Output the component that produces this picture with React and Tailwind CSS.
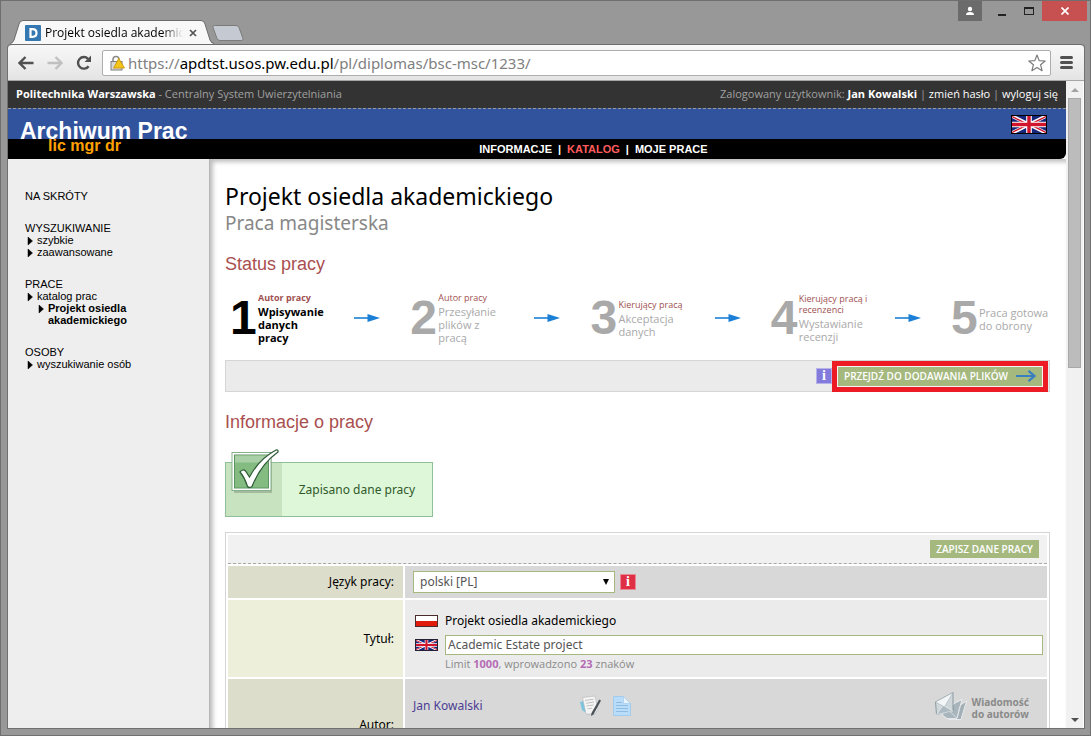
import React, { useState } from "react";

const steps = [
  { number: 1, who: ["Autor pracy"], what: ["Wpisywanie", "danych", "pracy"], active: true },
  { number: 2, who: ["Autor pracy"], what: ["Przesyłanie", "plików z", "pracą"] },
  { number: 3, who: ["Kierujący pracą"], what: ["Akceptacja", "danych"] },
  { number: 4, who: ["Kierujący pracą i", "recenzenci"], what: ["Wystawianie", "recenzji"] },
  { number: 5, who: [], what: ["Praca gotowa", "do obrony"] },
];

const UkFlag = ({ className }) => (
  <svg viewBox="0 0 60 30" preserveAspectRatio="none" className={className} aria-hidden="true">
    <rect width="60" height="30" fill="#15257a" />
    <path d="M0 0L60 30M60 0L0 30" stroke="#fff" strokeWidth="6" />
    <path d="M0 1L28 15M60 1L32 15M0 29L28 15M60 29L32 15" stroke="#cf142b" strokeWidth="2.5" />
    <path d="M30 0V30M0 15H60" stroke="#fff" strokeWidth="10" />
    <path d="M30 0V30M0 15H60" stroke="#cf142b" strokeWidth="6" />
  </svg>
);

const PlFlag = () => (
  <svg viewBox="0 0 23 12" className="w-[23px] h-3" aria-hidden="true">
    <rect width="23" height="6" fill="#fff" />
    <rect y="6" width="23" height="6" fill="#e01b0c" />
    <rect x="0.5" y="0.5" width="22" height="11" fill="none" stroke="#4a2a2a" />
  </svg>
);

const StepArrow = () => (
  <svg viewBox="0 0 26 10" className="w-[26px] h-[10px]" aria-hidden="true">
    <path d="M0 5H16" stroke="#1b7fd6" strokeWidth="1.6" />
    <path d="M13.5 1L26 5L13.5 9Z" fill="#1b7fd6" />
  </svg>
);

const InfoIcon = ({ className }) => (
  <span className={`w-4 h-4 shrink-0 border flex items-center justify-center text-white font-bold text-[14px] leading-none font-['Liberation_Serif',serif] ${className}`}>
    i
  </span>
);

const MenuItem = ({ children, nested }) => (
  <li className={nested ? "flex pl-[11px] font-bold" : "flex"}>
    <svg viewBox="0 0 12 12" className="w-3 h-3 shrink-0" aria-hidden="true">
      <path d="M3 3L7.5 7L3 11Z" fill="#000" stroke="#000" strokeWidth="0.5" />
    </svg>
    <a href="#">{children}</a>
  </li>
);

const TitleBar = () => (
  <div className="flex justify-between items-start h-[43px] pl-[9px] pr-[3px]">
    <div className="flex items-end h-full">
      <svg viewBox="0 0 13 24" className="w-[13px] h-6" aria-hidden="true">
        <path d="M0 24Q3 23 4 20L9 4Q10 0.5 13 0.5V24Z" fill="#f8f8f8" />
        <path d="M0 23.5Q3 23 4 20L9 4Q10 0.5 13 0.5" fill="none" stroke="#6c6c6c" />
      </svg>
      <div className="h-6 w-[178px] flex items-center border-t border-[#6c6c6c] bg-[#f8f8f8]">
        <svg viewBox="0 0 16 16" className="w-4 h-4 shrink-0 ml-[2px]" aria-hidden="true">
          <rect width="16" height="16" rx="1" fill="#3577b1" />
          <path d="M5.5 4.2H7.5Q11.5 4.2 11.5 8Q11.5 11.8 7.5 11.8H5.500Z" fill="none" stroke="#fff" strokeWidth="2.2" />
        </svg>
        <span className="ml-1 w-[138px] overflow-hidden whitespace-nowrap text-[12px] leading-4 font-['Open_Sans',sans-serif] bg-linear-to-r from-black from-85% to-transparent bg-clip-text text-transparent">
          Projekt osiedla akademickiego
        </span>
        <button aria-label="Zamknij kartę" className="ml-[6px]">
          <svg viewBox="0 0 8 8" className="w-2 h-2">
            <path d="M1 1L7 7M7 1L1 7" stroke="#555" strokeWidth="1.7" />
          </svg>
        </button>
      </div>
      <svg viewBox="0 0 13 24" className="w-[13px] h-6" aria-hidden="true">
        <path d="M13 24Q10 23 9 20L4 4Q3 0.5 0 0.5V24Z" fill="#f8f8f8" />
        <path d="M13 23.5Q10 23 9 20L4 4Q3 0.5 0 0.5" fill="none" stroke="#6c6c6c" />
      </svg>
      <button aria-label="Nowa karta" className="mb-[3px] -ml-[2px]">
        <svg viewBox="0 0 32 16" className="w-8 h-4">
          <path d="M2.5 0.5H24Q26 0.5 27 2.5L31 13.5Q31.5 15.5 29.5 15.5H8Q6 15.5 5 13.5L1 2.5Q0.5 0.5 2.5 0.5Z" fill="#c5cad2" stroke="#7b7b7b" />
        </svg>
      </button>
    </div>
    <div className="flex items-start">
      <button aria-label="Profil" className="w-6 h-5 bg-[#6b6b6b] flex items-center justify-center mr-[6px]">
        <svg viewBox="0 0 10 10" className="w-[10px] h-[10px]">
          <circle cx="5" cy="3" r="2.2" fill="#fff" />
          <path d="M1 9Q1 6 5 6Q9 6 9 9Z" fill="#fff" />
        </svg>
      </button>
      <button aria-label="Minimalizuj" className="w-[27px] h-5 flex items-end justify-center pb-[5px]">
        <span className="w-2 h-[2px] bg-[#222]"></span>
      </button>
      <button aria-label="Maksymalizuj" className="w-[27px] h-5 flex items-center justify-center">
        <span className="w-[10px] h-2 border border-t-2 border-[#222]"></span>
      </button>
      <button aria-label="Zamknij" className="w-[45px] h-5 bg-[#c75050] flex items-center justify-center">
        <svg viewBox="0 0 8 8" className="w-2 h-2">
          <path d="M0.5 0.5L7.5 7.5M7.5 0.5L0.5 7.5" stroke="#fff" strokeWidth="1.7" />
        </svg>
      </button>
    </div>
  </div>
);

const Toolbar = () => (
  <div className="h-[37px] shrink-0 flex items-center pl-[10px] pr-[11px] border-t border-b border-t-[#6c6c6c] border-b-[#a6a6a6] rounded-t-sm bg-linear-to-b from-[#f8f8f8] to-[#e4e4e4]">
    <button aria-label="Wstecz">
      <svg viewBox="0 0 16 14" className="w-4 h-[14px]">
        <path d="M15.5 7H2M7.5 1L1.5 7L7.5 13" fill="none" stroke="#505050" strokeWidth="2.4" />
      </svg>
    </button>
    <button aria-label="Dalej" className="ml-[13px]">
      <svg viewBox="0 0 16 14" className="w-4 h-[14px]">
        <path d="M0.5 7H14M8.5 1L14.5 7L8.5 13" fill="none" stroke="#c0c0c0" strokeWidth="2.4" />
      </svg>
    </button>
    <button aria-label="Odśwież" className="ml-[13px]">
      <svg viewBox="0 0 16 16" className="w-4 h-4">
        <path d="M12.6 11.2A5.8 5.8 0 1 1 12 3.8" fill="none" stroke="#505050" strokeWidth="2.4" />
        <path d="M15 0.5V7H8.5Z" fill="#505050" />
      </svg>
    </button>
    <div className="ml-[10px] flex-1 h-[26px] flex items-center pl-[7px] pr-1 border border-[#adadad] rounded-xs bg-white">
      <svg viewBox="0 0 15 16" className="w-[15px] h-4" aria-hidden="true">
        <path d="M3 8V4.5Q3 1.5 6 1.5Q9 1.5 9 4.5V8" fill="none" stroke="#8c8c8c" strokeWidth="1.6" />
        <rect x="1" y="6.5" width="11" height="8.5" fill="#d8d8d8" stroke="#7e7e7e" />
        <path d="M8.8 3.5L14.5 13H3.5Z" fill="#f4c518" stroke="#cf9c12" strokeLinejoin="round" />
      </svg>
      <div role="textbox" aria-label="Adres" className="ml-[3px] flex-1 whitespace-nowrap text-[15px] leading-5 text-[#808080]">
        https://<span className="text-black">apdtst.usos.pw.edu.pl</span>/pl/diplomas/bsc-msc/1233/
      </div>
      <button aria-label="Dodaj zakładkę">
        <svg viewBox="0 0 18 18" className="w-[18px] h-[18px]">
          <path d="M9 1L11.2 6.6L17.2 7L12.6 10.8L14.1 16.7L9 13.5L3.9 16.7L5.4 10.8L0.8 7L6.8 6.6Z" fill="#fff" stroke="#7c7c7c" strokeWidth="1.2" strokeLinejoin="round" />
        </svg>
      </button>
    </div>
    <button aria-label="Menu" className="ml-[9px] flex flex-col gap-[2px]">
      <span className="w-[13px] h-[3px] rounded-xs bg-[#505050]"></span>
      <span className="w-[13px] h-[3px] rounded-xs bg-[#505050]"></span>
      <span className="w-[13px] h-[3px] rounded-xs bg-[#505050]"></span>
    </button>
  </div>
);

const Header = () => (
  <header className="shrink-0">
    <div className="h-[27px] flex items-center justify-between px-2 bg-[#333] text-[11px] text-[#a0a0a0] font-['Open_Sans',sans-serif]">
      <div><b className="text-white">Politechnika Warszawska</b> - Centralny System Uwierzytelniania</div>
      <div>
        Zalogowany użytkownik: <b className="text-white">Jan Kowalski</b> | <a href="#" className="text-white">zmień hasło</a> | <a href="#" className="text-white">wyloguj się</a>
      </div>
    </div>
    <div className="h-[31px] flex justify-between items-center pl-3 pr-[19px] border-t border-dashed border-[#9a9a9a] bg-[#31529c]">
      <div className="self-end text-[23px] leading-4 font-bold text-white font-['Liberation_Sans',sans-serif]">Archiwum Prac</div>
      <a href="#" aria-label="English"><UkFlag className="w-9 h-[19px] border border-black" /></a>
    </div>
    <div className="h-5 flex items-center pl-10 rounded-br-md bg-black font-bold font-['Liberation_Sans',sans-serif]">
      <div className="h-5 text-[16px] leading-[14px] text-[#ffa200]">lic mgr dr</div>
      <nav className="flex-1 flex justify-center gap-[6px] text-[11px] leading-4 text-white">
        <a href="#">INFORMACJE</a>|<a href="#" className="text-[#ff5c5c]">KATALOG</a>|<a href="#">MOJE PRACE</a>
      </nav>
    </div>
  </header>
);

const Sidebar = () => (
  <aside className="w-[202px] shrink-0 pt-[31px] pl-[17px] flex flex-col gap-5 bg-[#eee] border-r border-[#b5b5b5] text-[11px] leading-3 text-black font-['Liberation_Sans',sans-serif]">
    <div>NA SKRÓTY</div>
    <div>
      <div>WYSZUKIWANIE</div>
      <ul>
        <MenuItem>szybkie</MenuItem>
        <MenuItem>zaawansowane</MenuItem>
      </ul>
    </div>
    <div>
      <div>PRACE</div>
      <ul>
        <MenuItem>katalog prac</MenuItem>
        <MenuItem nested>Projekt osiedla<br />akademickiego</MenuItem>
      </ul>
    </div>
    <div>
      <div>OSOBY</div>
      <ul>
        <MenuItem>wyszukiwanie osób</MenuItem>
      </ul>
    </div>
  </aside>
);

const Step = ({ step }) => (
  <li className={`w-[97px] shrink-0 flex items-center ${step.active ? "text-black font-bold" : "text-[#a9a9a9]"}`}>
    <span className="w-7 shrink-0 text-[48px] leading-none font-bold font-['Liberation_Sans',sans-serif]">{step.number}</span>
    <div className="whitespace-nowrap font-['Open_Sans',sans-serif]">
      <div className="text-[9px] leading-[11px] text-[#a05050]">
        {step.who.map(line => <div key={line}>{line}</div>)}
      </div>
      <div className="pt-[2px] text-[11px] leading-[13px]">
        {step.what.map(line => <div key={line}>{line}</div>)}
      </div>
    </div>
  </li>
);

const SavedMessage = () => (
  <div role="status" className="relative mt-7 w-[208px] h-[55px] flex items-center border border-[#8fbf96] bg-[#dff7d9] text-[12px] text-[#2f5a2a]">
    <div className="w-14 h-full bg-[#c8e3c0]"></div>
    <div className="flex-1 text-center">Zapisano dane pracy</div>
    <svg viewBox="0 0 50 50" className="absolute left-[5px] -top-[14px] w-[50px] h-[50px]" aria-hidden="true">
      <rect x="3" y="6" width="38" height="38" fill="#000" opacity="0.18" />
      <rect x="1" y="3.5" width="39" height="38" fill="#fff" stroke="#86b08a" />
      <rect x="3.5" y="6" width="34" height="33" fill="#83bb80" stroke="#5d9462" />
      <rect x="4" y="6.5" width="33" height="7" fill="#a9cfa6" />
      <path d="M9 23Q12 19.5 14.5 22L18.5 28Q28 10 45.5 0.8Q47.5 0.8 47 3Q30 15 21 37.5Q18.5 39.5 16.5 37.5Q14 29 9 23Z" fill="#fff" stroke="#2e5c36" strokeWidth="1.2" />
    </svg>
  </div>
);

const Row = ({ label, htmlFor, alt, className, children }) => (
  <div className={`flex gap-[2px] ${className}`}>
    <label htmlFor={htmlFor} className={`w-[175px] shrink-0 flex items-center justify-end pr-[9px] text-black ${alt ? "bg-[#edefdb]" : "bg-[#dcddca]"}`}>
      {label}
    </label>
    <div className={`flex-1 px-2 ${alt ? "bg-[#ebebeb]" : "bg-[#d8d8d8]"}`}>{children}</div>
  </div>
);

const ThesisForm = () => {
  const [language, setLanguage] = useState("pl");
  const [title, setTitle] = useState("Academic Estate project");

  return (
    <form className="mt-[15px] p-[2px] border border-[#d5d5d5] flex flex-col gap-[2px] text-[12px]" onSubmit={(e) => e.preventDefault()}>
      <div className="h-[29px] flex items-center justify-end pr-2 bg-[#f1f1f1] border-b border-dashed border-[#a8a8a8]">
        <button className="h-[18px] px-[6px] bg-[#a5b97f] text-white text-[10px] leading-4 font-semibold font-['Open_Sans',sans-serif]">ZAPISZ DANE PRACY</button>
      </div>
      <Row label="Język pracy:" htmlFor="language" className="h-8">
        <div className="h-full flex items-center gap-[5px]">
          <div className="relative w-[202px]">
            <select
              id="language"
              value={language}
              onChange={(e) => setLanguage(e.target.value)}
              className="w-full h-[22px] pl-[6px] appearance-none border border-[#a5b97f] bg-white text-[#555]"
            >
              <option value="pl">polski [PL]</option>
              <option value="en">angielski [EN]</option>
            </select>
            <svg viewBox="0 0 6 6" className="absolute right-[6px] top-2 w-[6px] h-[6px] pointer-events-none" aria-hidden="true">
              <path d="M0 0H6L3 6Z" fill="#000" />
            </svg>
          </div>
          <InfoIcon className="bg-[#df2f44] border-[#e88a96]" />
        </div>
      </Row>
      <Row label="Tytuł:" htmlFor="title" alt className="h-[77px]">
        <div className="h-full flex flex-col justify-center pt-[5px] -mr-1 pl-[2px]">
          <div className="flex items-center gap-[7px] h-[25px] pb-[3px] text-black"><PlFlag />Projekt osiedla akademickiego</div>
          <div className="flex items-center gap-[7px]">
            <UkFlag className="w-[23px] h-3 border border-[#223]" />
            <input
              id="title"
              value={title}
              onChange={(e) => setTitle(e.target.value)}
              className="flex-1 h-5 px-[2px] border border-[#a5b97f] bg-white text-[#555]"
            />
          </div>
          <div className="pl-[30px] text-[11px] leading-[18px] text-[#8a8a8a] font-['Open_Sans',sans-serif]">
            Limit <b className="text-[#b56cb5]">1000</b>, wprowadzono <b className="text-[#b56cb5]">{title.length}</b> znaków
          </div>
        </div>
      </Row>
      <Row label="Autor:" className="h-[92px]">
        <div className="h-[54px] flex items-center">
          <a href="#" className="w-[167px] text-[#4b3d94]">Jan Kowalski</a>
          <svg viewBox="0 0 22 22" className="w-[22px] h-[22px]" aria-hidden="true">
            <path d="M0 7L4 6L9 20L2 15Z" fill="#7cc4df" />
            <path d="M2.5 2.500L15 1L18 14L15 19L6 19Z" fill="#f4f4f4" stroke="#b5b5b5" strokeWidth="0.6" />
            <path d="M5 5.5L13.500 4.2M6 8.300L14 7M6.5 11L13.500 10M7.5 13.800L12 13.200" stroke="#c2c2c2" />
            <path d="M19.2 4.500L21 5.500L13.500 19.500L11 21L11.500 18Z" fill="#4c5258" />
          </svg>
          <svg viewBox="0 0 18 20" className="ml-[11px] w-[18px] h-5" aria-hidden="true">
            <path d="M0.5 0.5H10.5L17.5 7.5V19.5H0.5Z" fill="#b9dcf8" stroke="#a3cbec" />
            <path d="M10.5 0.5V7.5H17.5Z" fill="#e8f4fd" stroke="#a3cbec" strokeWidth="0.7" />
            <path d="M3 6.5H9M3 9.5H15M3 12.5H15M3 15.5H15" stroke="#8fbce2" />
          </svg>
          <a href="#" className="ml-auto mr-[10px] flex items-end gap-[5px] text-[10px] leading-3 font-bold text-[#8a8a8a]">
            <svg viewBox="0 0 32 28" className="w-8 h-7" aria-hidden="true">
              <path d="M9 24L14 27.5H26L31.500 9L27 12Z" fill="#a3afb6" stroke="#f2f5f6" strokeWidth="0.8" />
              <path d="M7 23L12 26.500H22L27 7.500L20 11Z" fill="#a9b5bc" stroke="#f2f5f6" strokeWidth="0.8" />
              <path d="M12 17L22 26L25 14" fill="none" stroke="#dfe5e8" strokeWidth="0.8" />
              <path d="M0.500 10L18 0.500V19L1.500 22.500Z" fill="#cfd7db" stroke="#6f7f88" strokeWidth="0.700" />
              <path d="M1.500 22.500L8 13.500L18 19Z" fill="#aebac1" stroke="#f2f5f6" strokeWidth="0.600" />
              <path d="M0.500 10L9.500 15L18 0.500Z" fill="#f3f6f7" stroke="#a3afb6" strokeWidth="0.600" />
            </svg>
            <span>Wiadomość<br />do autorów</span>
          </a>
        </div>
      </Row>
    </form>
  );
};

const Main = () => (
  <main className="flex-1 min-w-0 pl-[15px] pr-4 pt-[21px] bg-white shadow-[inset_3px_3px_4px_rgba(0,0,0,0.25)]">
    <h1 className="text-[23px] leading-8 text-black">Projekt osiedla akademickiego</h1>
    <p className="text-[19px] leading-[22px] text-[#888]">Praca magisterska</p>
    <h2 className="mt-[18px] text-[18px] leading-6 text-[#a94f4f] font-['Liberation_Sans',sans-serif]">Status pracy</h2>
    <ol className="h-[84px] flex items-center pl-[5px] pr-[2px]">
      {steps.map((step, index) => (
        <React.Fragment key={step.number}>
          {index > 0 && <li className="flex-1 flex justify-center pr-[3px]"><StepArrow /></li>}
          <Step step={step} />
        </React.Fragment>
      ))}
    </ol>
    <div className="h-8 flex items-center justify-end pr-[1px] border border-[#d5d5d5] bg-[#ebebeb]">
      <InfoIcon className="bg-[#837bdc] border-[#b7b2ea]" />
      <div className="border-[5px] border-[#ed1c24] bg-[#f5f5f5] p-[1px]">
        <button className="h-[19px] flex items-center gap-2 px-[6px] bg-[#a5b97f] text-white text-[10px] leading-4 font-semibold whitespace-nowrap font-['Open_Sans',sans-serif]">
          PRZEJDŹ DO DODAWANIA PLIKÓW
          <svg viewBox="0 0 20 12" className="w-5 h-3" aria-hidden="true">
            <path d="M0 6H18M12.5 0.8L18.5 6L12.5 11.2" fill="none" stroke="#3a7fc0" strokeWidth="2.2" />
          </svg>
        </button>
      </div>
    </div>
    <h2 className="mt-[18px] text-[18px] leading-6 text-[#a94f4f] font-['Liberation_Sans',sans-serif]">Informacje o pracy</h2>
    <SavedMessage />
    <ThesisForm />
  </main>
);

const Scrollbar = () => (
  <div className="w-[18px] shrink-0 flex flex-col items-center bg-[#f1f1f1] border-r border-white" aria-hidden="true">
    <div className="h-[17px] flex items-center">
      <svg viewBox="0 0 8 4" className="w-2 h-1"><path d="M0 4L4 0L8 4Z" fill="#a3a3a3" /></svg>
    </div>
    <div className="flex-1 w-[13px]">
      <div className="h-[44%] border border-[#a8a8a8] bg-[#bcbcbc]"></div>
    </div>
    <div className="h-[17px] flex items-center">
      <svg viewBox="0 0 8 4" className="w-2 h-1"><path d="M0 0L4 4L8 0Z" fill="#505050" /></svg>
    </div>
  </div>
);

export default function App() {
  return (
    <div className="h-screen overflow-hidden flex flex-col pb-[6px] border border-[#6f6f6f] bg-[#989898] font-['Noto_Sans',sans-serif]">
      <TitleBar />
      <div className="flex-1 min-h-0 flex flex-col ml-[6px] mr-[5px] border-x border-b border-[#707070] rounded-t-sm">
        <Toolbar />
        <div className="flex-1 min-h-0 flex overflow-hidden bg-white">
          <div className="flex-1 min-w-0 flex flex-col overflow-hidden">
            <Header />
            <div className="flex-1 min-h-0 flex overflow-hidden">
              <Sidebar />
              <Main />
            </div>
          </div>
          <Scrollbar />
        </div>
      </div>
    </div>
  );
}
